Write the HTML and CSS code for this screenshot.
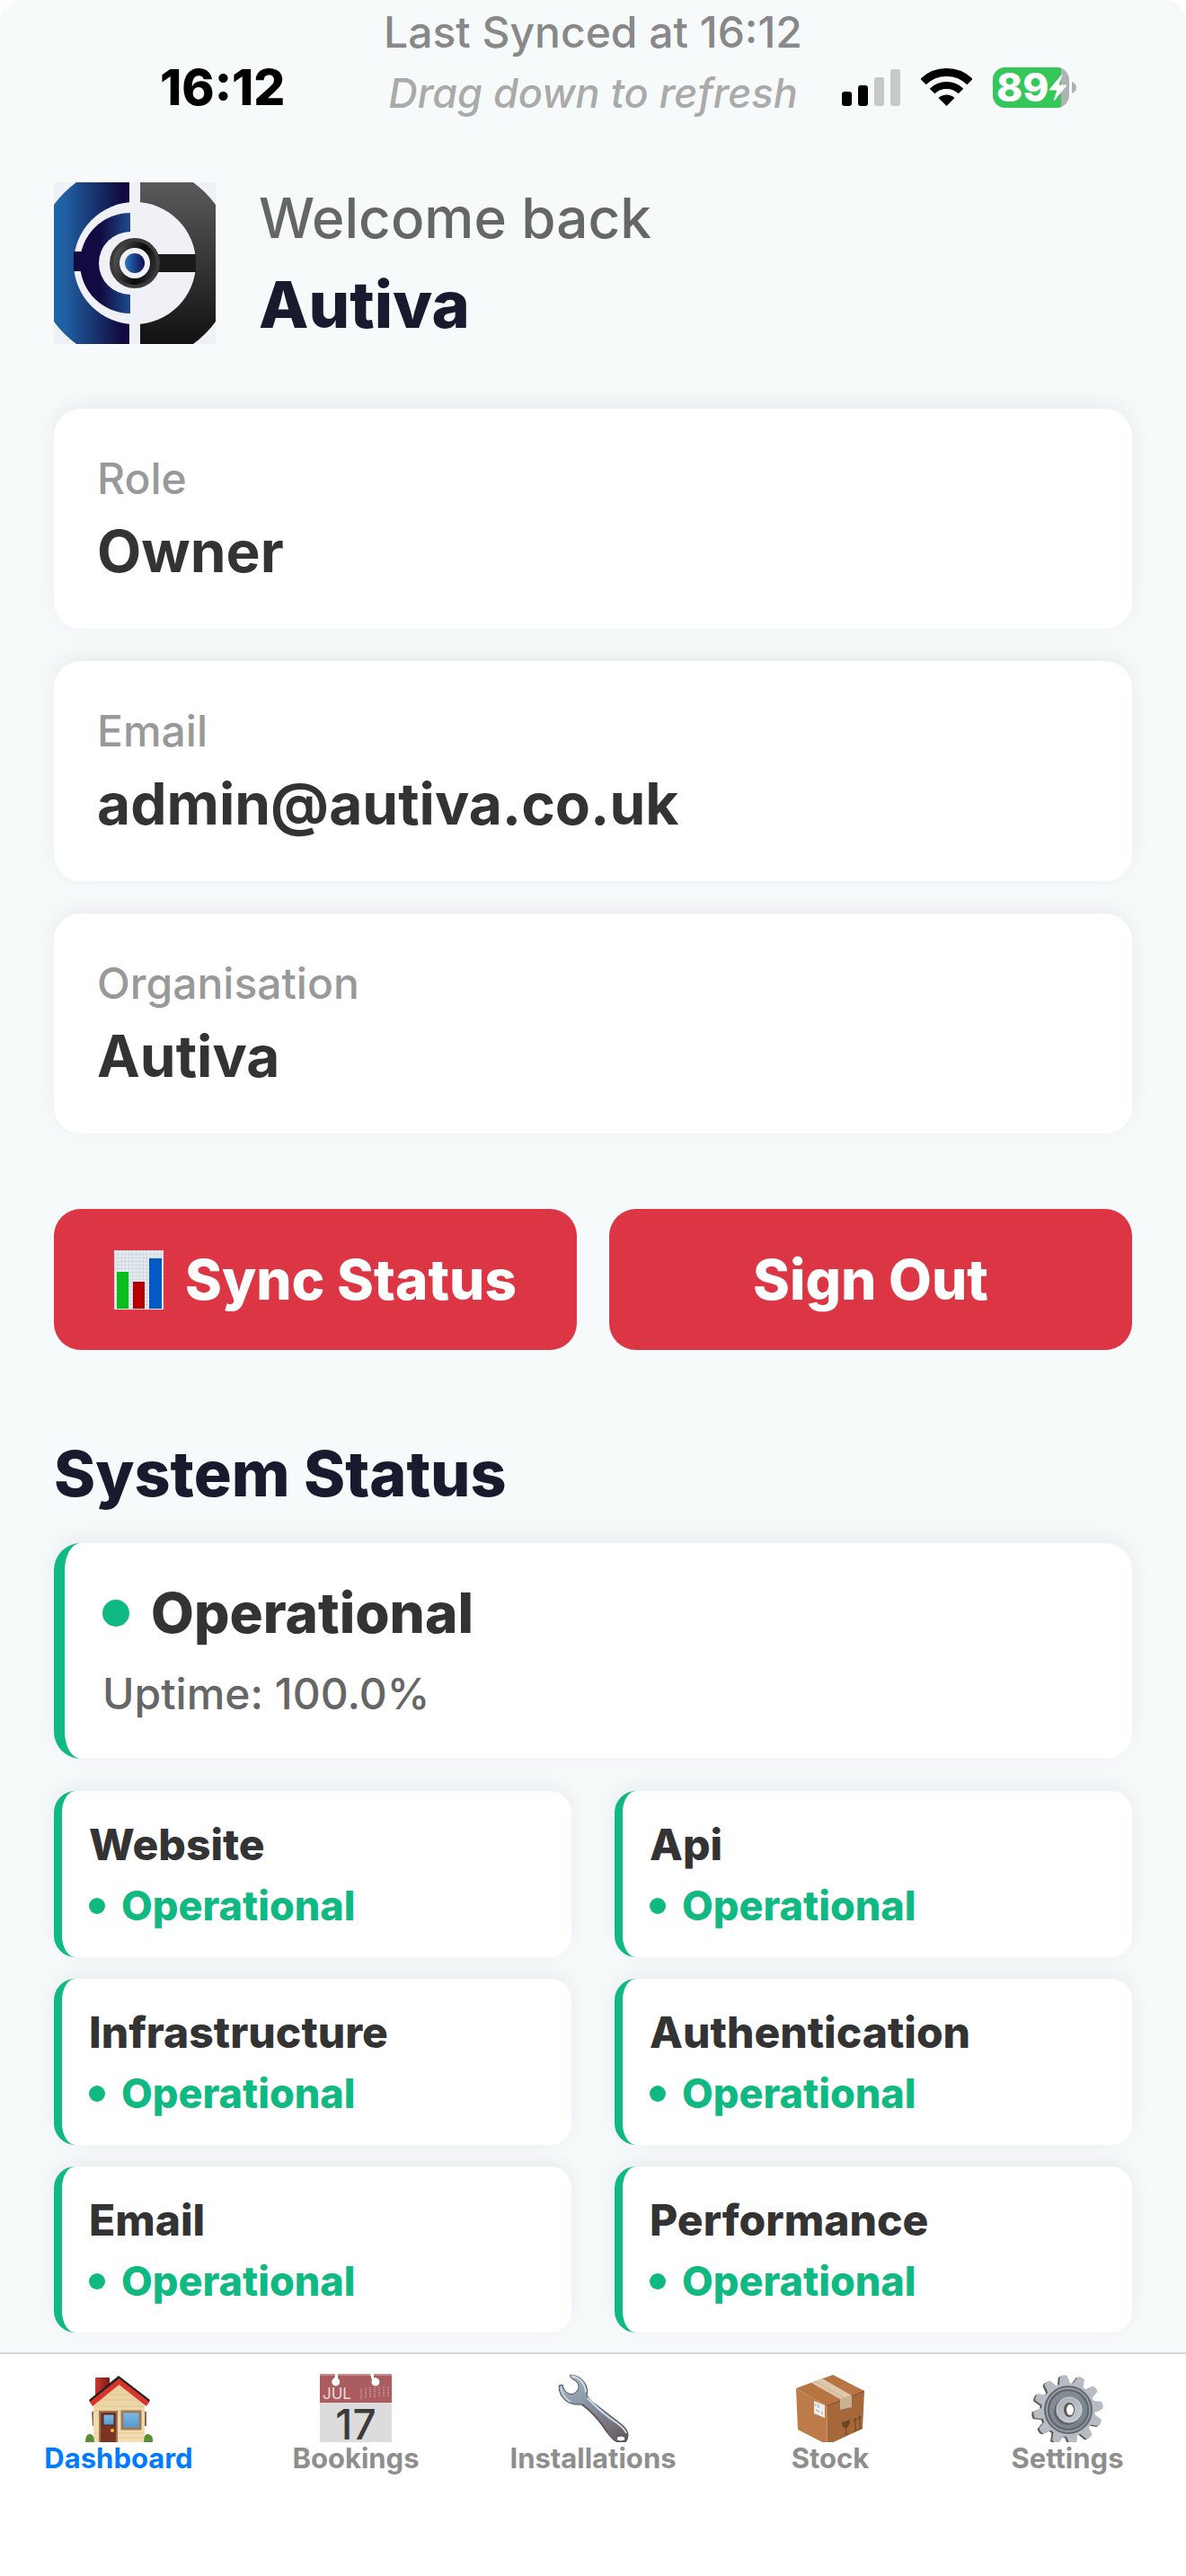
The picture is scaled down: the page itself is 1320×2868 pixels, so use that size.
FILE: index.html
```html
<!DOCTYPE html>
<html lang="en">
<head>
    <meta charset="UTF-8">
    <meta name="viewport" content="width=device-width, initial-scale=1.0">
    <title>Autiva Dashboard</title>
    <link rel="stylesheet" href="styles.css">
</head>
<body>
    <div class="status-bar">
        <span class="clock">16:12</span>
        <div class="status-icons">
            <svg width="65" height="42" viewBox="0 0 65 42" role="img" aria-label="Signal">
                <rect x="0" y="26" width="11" height="16" rx="3"/>
                <rect x="18" y="19" width="11" height="23" rx="3"/>
                <rect x="36" y="10" width="11" height="32" rx="3" fill="#c5c9ca"/>
                <rect x="54" y="1" width="11" height="41" rx="3" fill="#c5c9ca"/>
            </svg>
            <svg width="57" height="42" viewBox="0 0 57 42" role="img" aria-label="Wi-Fi">
                <path d="M2.5 15A37.5 37.5 0 0 1 54.5 15" fill="none" stroke="#000" stroke-width="9"/>
                <path d="M12.5 25.5A23 23 0 0 1 44.5 25.5" fill="none" stroke="#000" stroke-width="8"/>
                <path d="M28.5 42L19.5 33A13 13 0 0 1 37.5 33Z"/>
            </svg>
            <svg class="battery" width="93" height="45" viewBox="0 0 93 45" role="img" aria-label="Battery">
                <defs>
                    <clipPath id="battery"><rect width="85" height="45" rx="14"/></clipPath>
                </defs>
                <g clip-path="url(#battery)">
                    <rect width="85" height="45" fill="#b0b3b4"/>
                    <rect width="76" height="45" fill="#35c759"/>
                </g>
                <path d="M88 16Q93 18 93 22.5T88 29Z" fill="#b0b3b4"/>
                <text class="battery-text" x="4" y="38">89</text>
                <path d="M77 8L63 25H72L68 37L82 20H73Z" fill="#fff" stroke="#fff" stroke-linejoin="round"/>
            </svg>
        </div>
    </div>

    <main class="content">
        <div class="refresh">
            <p class="synced">Last Synced at 16:12</p>
            <p class="drag">Drag down to refresh</p>
        </div>

        <header class="welcome">
            <svg class="logo" width="180" height="180" viewBox="0 0 180 180" role="img" aria-label="Autiva logo">
                <defs>
                    <linearGradient id="blue" x1="0" x2="1"><stop offset="0" stop-color="#2065aa"/><stop offset=".15" stop-color="#205fa1"/><stop offset=".9" stop-color="#120b42"/></linearGradient>
                    <linearGradient id="navy" x1="0" x2="1"><stop offset=".4" stop-color="#120b42"/><stop offset="1" stop-color="#1d4c8c"/></linearGradient>
                    <linearGradient id="dark" x2="0" y2="1"><stop offset="0" stop-color="#5a5a5a"/><stop offset="1" stop-color="#111"/></linearGradient>
                    <linearGradient id="hub" x2="1" y2=".3"><stop offset="0" stop-color="#666"/><stop offset=".7" stop-color="#080808"/><stop offset="1" stop-color="#2c2c2c"/></linearGradient>
                    <linearGradient id="eye"><stop offset="0" stop-color="#2776c0"/><stop offset="1" stop-color="#120b50"/></linearGradient>
                    <clipPath id="round"><circle cx="90" cy="90" r="111"/></clipPath>
                </defs>
                <rect width="180" height="180" fill="#f0f1f6"/>
                <g clip-path="url(#round)">
                    <rect width="84" height="180" fill="url(#blue)"/>
                    <rect x="96" width="84" height="180" fill="url(#dark)"/>
                </g>
                <circle cx="90" cy="90" r="68" fill="#f0f1f6"/>
                <rect x="22" y="77" width="15" height="22" fill="#120b42"/>
                <path d="M85 34A56 56 0 0 0 85 146V125A35 35 0 0 1 85 55Z" fill="url(#navy)"/>
                <rect x="112" y="80" width="46" height="20" fill="#1a1a1a"/>
                <circle cx="90" cy="90" r="26" fill="url(#hub)" stroke="#3a3a3a" stroke-width="4"/>
                <circle cx="90" cy="90" r="17" fill="#f0f1f6"/>
                <circle cx="90" cy="90" r="11" fill="url(#eye)"/>
            </svg>
            <div class="welcome-text">
                <p class="greeting">Welcome back</p>
                <h1>Autiva</h1>
            </div>
        </header>

        <section class="info">
            <div class="info-card">
                <p class="label">Role</p>
                <p class="value">Owner</p>
            </div>
            <div class="info-card">
                <p class="label">Email</p>
                <p class="value">admin@autiva.co.uk</p>
            </div>
            <div class="info-card">
                <p class="label">Organisation</p>
                <p class="value">Autiva</p>
            </div>
        </section>

        <div class="actions">
            <button type="button">
                <svg width="55" height="66" viewBox="0 0 55 66" aria-hidden="true">
                    <defs>
                        <pattern id="grid" width="4" height="4" patternUnits="userSpaceOnUse"><path d="M0 0H4M0 0V4" stroke="#b9cbd8" fill="none"/></pattern>
                    </defs>
                    <rect width="55" height="66" fill="#e6eaee"/>
                    <rect width="55" height="66" fill="url(#grid)"/>
                    <rect x="3" y="24" width="13" height="41" fill="#09bd1c"/>
                    <rect x="21" y="35" width="13" height="30" fill="#b60000"/>
                    <rect x="39" y="9" width="14" height="56" fill="#0459c2"/>
                </svg>
                Sync Status
            </button>
            <button type="button">Sign Out</button>
        </div>

        <section class="system">
            <h2>System Status</h2>
            <div class="overall">
                <div class="overall-row">
                    <span class="dot"></span>
                    <h3>Operational</h3>
                </div>
                <p class="uptime">Uptime: 100.0%</p>
            </div>
            <div class="services">
                <div class="service">
                    <h4>Website</h4>
                    <p class="state"><span class="dot-small"></span>Operational</p>
                </div>
                <div class="service">
                    <h4>Api</h4>
                    <p class="state"><span class="dot-small"></span>Operational</p>
                </div>
                <div class="service">
                    <h4>Infrastructure</h4>
                    <p class="state"><span class="dot-small"></span>Operational</p>
                </div>
                <div class="service">
                    <h4>Authentication</h4>
                    <p class="state"><span class="dot-small"></span>Operational</p>
                </div>
                <div class="service">
                    <h4>Email</h4>
                    <p class="state"><span class="dot-small"></span>Operational</p>
                </div>
                <div class="service">
                    <h4>Performance</h4>
                    <p class="state"><span class="dot-small"></span>Operational</p>
                </div>
            </div>
        </section>
    </main>

    <nav class="tabs">
        <a href="#" class="active">
            <!-- house -->
            <svg width="80" height="76" viewBox="0 0 80 76" aria-hidden="true">
                <defs>
                    <linearGradient id="chimney"><stop offset="0" stop-color="#c93b31"/><stop offset="1" stop-color="#7d1914"/></linearGradient>
                    <linearGradient id="wall" x2="0" y2="1"><stop offset="0" stop-color="#e9cf9e"/><stop offset="1" stop-color="#f5dfb4"/></linearGradient>
                    <linearGradient id="glass" x2="0" y2="1"><stop offset="0" stop-color="#7fbbe6"/><stop offset="1" stop-color="#5596cf"/></linearGradient>
                </defs>
                <rect x="14" y="4" width="16" height="24" rx="1" fill="url(#chimney)"/>
                <path d="M10 42H14V58H11ZM67 42H71V58H68Z" fill="#85694b"/>
                <path d="M12 76V32L41 9L69 32V76Z" fill="url(#wall)"/>
                <path d="M13 36H68M13 41H68M13 66H68M13 71H68M22 29H60M30 23H52" stroke="#e0c592" stroke-width="1"/>
                <path d="M7 29L40 2L75 29L73 33L40.500 7L9 33Z" fill="#20221f"/>
                <path d="M8 31L40.500 5L74 31L71 36L40.500 12L11 36Z" fill="#d8342c"/>
                <rect x="18" y="41" width="21" height="35" fill="#9a7654"/>
                <rect x="20" y="43" width="17" height="33" fill="#7a3420"/>
                <rect x="23" y="45" width="12" height="12" fill="url(#glass)" stroke="#4d2114"/>
                <circle cx="33" cy="63" r="2" fill="#f5c32c"/>
                <rect x="44" y="42" width="20" height="19" fill="url(#glass)" stroke="#9a7c59" stroke-width="3"/>
                <path d="M3 76Q3 67 8 67Q13 67 13 76ZM68 76Q68 66 73 67Q79 68 78 76Z" fill="#5c8f35"/>
            </svg>
            <span>Dashboard</span>
        </a>
        <a href="#">
            <!-- calendar -->
            <svg class="calendar" width="80" height="76" viewBox="0 0 80 76" aria-hidden="true">
                <rect width="80" height="76" fill="#dcdcdc"/>
                <rect width="80" height="32" fill="#aa5c5e"/>
                <path d="M0 1H80" stroke="#c58b8c" stroke-width="2"/>
                <path d="M17 0H20V5A4.500 4.500 0 1 1 15.500 5Q17 4 17 0ZM56 0H60V4Q66 4 66.500 9A4.500 4.500 0 1 1 58 7Z" fill="#fff"/>
                <path d="M46 17V28M51 16V27M56 15V27M61 15V27M66 14V26M71 14V25M76 14V25" stroke="#c39596" stroke-width="2" stroke-dasharray="1 1"/>
                <text class="cal-month" x="3" y="28">JUL</text>
                <text class="cal-day" x="40" y="73">17</text>
            </svg>
            <span>Bookings</span>
        </a>
        <a href="#">
            <!-- wrench -->
            <svg width="80" height="76" viewBox="0 0 80 76" aria-hidden="true">
                <defs>
                    <linearGradient id="steel" x1=".2" y1="0" x2=".9" y2="1"><stop offset="0" stop-color="#a3b1c1"/><stop offset=".35" stop-color="#8b98a8"/><stop offset=".75" stop-color="#75737e"/><stop offset="1" stop-color="#67565c"/></linearGradient>
                </defs>
                <path d="M15 1Q27 2 32 12Q35 19 33 24L39 31Q55 43 69 54Q79 61 79 68Q79 73 76 76H67Q59 72 53 61Q42 44 27 34Q20 35 13 32Q2 26 2 13L6 12Q8 20 13 22Q19 24 23 18Q26 13 21 8Q13 4 15 1Z" fill="url(#steel)" stroke="#4b5059"/>
                <path d="M16 2Q30 5 32 20M34 27Q50 44 67 55Q75 61 77 66" fill="none" stroke="#cfdae6" stroke-width="2"/>
                <path d="M4 15Q7 27 15 31" fill="none" stroke="#c0cedd" stroke-width="2"/>
                <path d="M28 34Q44 46 56 65" fill="none" stroke="#6e4f58" stroke-width="2"/>
                <ellipse cx="71" cy="72" rx="5" ry="3" fill="#fff" stroke="#4f474c"/>
            </svg>
            <span>Installations</span>
        </a>
        <a href="#">
            <!-- box -->
            <svg width="80" height="76" viewBox="0 0 80 76" aria-hidden="true">
                <path d="M2 16L43 1L78 19L36 36Z" fill="#b87543"/>
                <path d="M2 16L36 36L37 79L4 62Z" fill="#bd7b49"/>
                <path d="M36 36L78 19L76 61L37 79Z" fill="#a4683a"/>
                <path d="M36 36L78 19" stroke="#7d4a27"/>
                <path d="M36 36V79" stroke="#c98d5c"/>
                <path d="M19 10L31 5L64 24L51 28Z" fill="#ddc8ac"/>
                <path d="M23 8L56 27" stroke="#c9b294"/>
                <path d="M51 28L64 24V37L51 40Z" fill="#c9b294"/>
                <path d="M22 30L34 35V49L22 44Z" fill="#eee"/>
                <path d="M24 33V36M27 34V38M24 40L28 42M31 42V45" stroke="#999"/>
                <path d="M53 54L62 51Q62 58 58 60V66L61 66L54 69L57 67V60Q53 60 53 54Z" fill="#6b4426"/>
                <path d="M68 62V50M66 53L68 49L70 51M73 60V48M71 51L73 47L75 49M66 64L75 60" fill="none" stroke="#6b4426"/>
            </svg>
            <span>Stock</span>
        </a>
        <a href="#">
            <!-- gear -->
            <svg width="80" height="76" viewBox="0 0 80 76" aria-hidden="true">
                <defs>
                    <linearGradient id="gear" x2=".6" y2="1"><stop offset="0" stop-color="#a8acb2"/><stop offset="1" stop-color="#c2c8d1"/></linearGradient>
                    <linearGradient id="ring" x2="1" y2="1"><stop offset="0" stop-color="#8b9096"/><stop offset="1" stop-color="#75808a"/></linearGradient>
                    <path id="tooth" d="M-6.500 -27L-4 -38Q0 -40 4 -38L6.500 -27Z"/>
                    <g id="cog">
                        <circle r="30"/>
                        <use href="#tooth" transform="rotate(-8)"/>
                        <use href="#tooth" transform="rotate(22)"/>
                        <use href="#tooth" transform="rotate(52)"/>
                        <use href="#tooth" transform="rotate(82)"/>
                        <use href="#tooth" transform="rotate(112)"/>
                        <use href="#tooth" transform="rotate(142)"/>
                        <use href="#tooth" transform="rotate(172)"/>
                        <use href="#tooth" transform="rotate(202)"/>
                        <use href="#tooth" transform="rotate(232)"/>
                        <use href="#tooth" transform="rotate(262)"/>
                        <use href="#tooth" transform="rotate(292)"/>
                        <use href="#tooth" transform="rotate(322)"/>
                    </g>
                </defs>
                <use href="#cog" transform="translate(39 41)" fill="#5c5a54"/>
                <use href="#cog" transform="translate(41 40)" fill="#b7bcc4"/>
                <circle cx="41" cy="40" r="26" fill="url(#ring)" stroke="#666b70" stroke-width="2"/>
                <circle cx="41" cy="40" r="22" fill="none" stroke="#5f656c" stroke-width="2"/>
                <circle cx="41" cy="40" r="24" fill="none" stroke="#a5acb3" stroke-width="1"/>
                <circle cx="40" cy="42" r="15" fill="#62656b"/>
                <circle cx="42" cy="40" r="14" fill="url(#gear)" stroke="#d4d9e0"/>
                <ellipse cx="42" cy="40" rx="6" ry="8" fill="#5c5550"/>
                <ellipse cx="43" cy="40" rx="4" ry="6" fill="#fff"/>
            </svg>
            <span>Settings</span>
        </a>
    </nav>
</body>
</html>
```
FILE: styles.css
```css
* {
    box-sizing: border-box;
    padding: 0;
    margin: 0;
}
body {
    font-family: Inter, 'Liberation Sans', sans-serif;
    background: #fff;
    min-height: 100vh;
    display: flex;
    flex-direction: column;
    position: relative;
}
.status-bar {
    position: absolute;
    top: 64px;
    left: 0;
    right: 0;
    height: 66px;
    padding: 0 122px 0 178px;
    display: flex;
    justify-content: space-between;
    align-items: center;
}
.clock {
    font-size: 55px;
    line-height: 66px;
    font-weight: 800;
    color: #000;
}
.status-icons {
    display: flex;
    align-items: center;
    gap: 23px;
}
.battery, .calendar {
    overflow: visible;
}
.battery-text {
    font-size: 44px;
    font-weight: 800;
    fill: #fff;
}
.content {
    flex: 1;
    background: #f7fafb;
    border-radius: 24px 24px 0 0;
    padding: 6px 60px 22px;
}
.refresh {
    display: flex;
    flex-direction: column;
    gap: 8px;
    text-align: center;
    line-height: 60px;
    font-weight: 500;
}
.synced {
    font-size: 48px;
    color: #888;
}
.drag {
    font-size: 45px;
    font-style: italic;
    color: #aaa;
}
.welcome {
    display: flex;
    align-items: center;
    gap: 48px;
    margin-top: 69px;
}
.welcome-text {
    display: flex;
    flex-direction: column;
    gap: 16px;
}
.greeting {
    font-size: 62px;
    line-height: 76px;
    font-weight: 500;
    color: #666;
}
h1 {
    font-size: 72px;
    line-height: 84px;
    font-weight: 800;
    color: #1a1a2e;
}
.info {
    display: flex;
    flex-direction: column;
    gap: 36px;
    margin-top: 72px;
}
.info-card, .overall, .service {
    background: #fff;
    box-shadow: 0 -6px 24px rgba(0, 0, 0, 0.06);
}
.info-card {
    border-radius: 30px;
    padding: 48px;
}
.label {
    font-size: 48px;
    line-height: 60px;
    font-weight: 500;
    color: #999;
    margin-bottom: 12px;
}
.value {
    font-size: 64px;
    line-height: 77px;
    font-weight: 700;
    color: #333;
}
.actions {
    display: grid;
    grid-template-columns: 1fr 1fr;
    gap: 36px;
    margin-top: 84px;
}
.actions button {
    display: flex;
    justify-content: center;
    align-items: center;
    gap: 24px;
    padding: 42px 0;
    border: none;
    border-radius: 30px;
    background: #dc3543;
    color: #fff;
    font-family: inherit;
    font-size: 62px;
    line-height: 73px;
    font-weight: 800;
    cursor: pointer;
}
h2 {
    font-size: 70px;
    line-height: 83px;
    font-weight: 800;
    color: #1a1a2e;
    margin: 96px 0 36px;
}
.overall {
    border-left: 12px solid #0fb981;
    border-radius: 30px;
    padding: 42px;
}
.overall-row {
    display: flex;
    align-items: center;
    gap: 24px;
    margin-bottom: 24px;
}
.dot {
    width: 30px;
    height: 30px;
    border-radius: 50%;
    background: #0fb981;
}
h3 {
    font-size: 62px;
    line-height: 72px;
    font-weight: 800;
    color: #333;
}
.uptime {
    font-size: 48px;
    line-height: 60px;
    font-weight: 500;
    color: #666;
}
.services {
    display: grid;
    grid-template-columns: 1fr 1fr;
    gap: 24px 48px;
    margin-top: 36px;
}
.service {
    border-left: 9px solid #0fb981;
    border-radius: 24px;
    padding: 30px;
}
h4 {
    font-size: 48px;
    line-height: 59px;
    font-weight: 800;
    color: #333;
    margin-bottom: 12px;
}
.state {
    display: flex;
    align-items: center;
    gap: 18px;
    font-size: 45px;
    line-height: 54px;
    font-weight: 800;
    color: #0fb981;
}
.dot-small {
    width: 18px;
    height: 18px;
    border-radius: 50%;
    background: #0fb981;
}
.tabs {
    display: grid;
    grid-template-columns: repeat(5, 1fr);
    border-top: 2px solid #d8d9da;
    padding: 22px 0 113px;
}
.tabs a {
    display: flex;
    flex-direction: column;
    align-items: center;
    font-size: 31px;
    line-height: 36px;
    font-weight: 700;
    color: #8e8e8f;
    text-decoration: none;
}
.tabs a.active {
    color: #007aff;
}
.cal-month {
    font-size: 17px;
    font-weight: 400;
    fill: #ecdcdc;
}
.cal-day {
    font-size: 46px;
    font-weight: 500;
    text-anchor: middle;
    fill: #3c3c3c;
}
```
